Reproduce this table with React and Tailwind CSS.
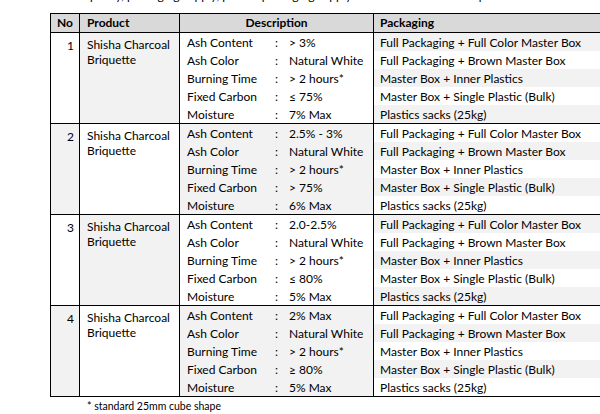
import React from 'react';

const groups = [
    {
        no: 1,
        specs: [
            ['Ash Content', '> 3%'],
            ['Ash Color', 'Natural White'],
            ['Burning Time', '> 2 hours*'],
            ['Fixed Carbon', '≤ 75%'],
            ['Moisture', '7% Max'],
        ],
    },
    {
        no: 2,
        specs: [
            ['Ash Content', '2.5% - 3%'],
            ['Ash Color', 'Natural White'],
            ['Burning Time', '> 2 hours*'],
            ['Fixed Carbon', '> 75%'],
            ['Moisture', '6% Max'],
        ],
    },
    {
        no: 3,
        specs: [
            ['Ash Content', '2.0-2.5%'],
            ['Ash Color', 'Natural White'],
            ['Burning Time', '> 2 hours*'],
            ['Fixed Carbon', '≤ 80%'],
            ['Moisture', '5% Max'],
        ],
    },
    {
        no: 4,
        specs: [
            ['Ash Content', '2% Max'],
            ['Ash Color', 'Natural White'],
            ['Burning Time', '> 2 hours*'],
            ['Fixed Carbon', '≥ 80%'],
            ['Moisture', '5% Max'],
        ],
    },
];

const packaging = [
    'Full Packaging + Full Color Master Box',
    'Full Packaging + Brown Master Box',
    'Master Box + Inner Plastics',
    'Master Box + Single Plastic (Bulk)',
    'Plastics sacks (25kg)',
];

const App = () => {
    return (
        <div className="w-[600px] h-[414px] overflow-hidden bg-white text-black text-[12px]" style={{ fontFamily: 'Lato, "Open Sans", sans-serif' }}>
            {/* bottom of the paragraph above, cut off by the page edge */}
            <div className="h-[13px] overflow-hidden relative">
                <div className="absolute bottom-[10px] left-[86px] whitespace-nowrap leading-[14px] text-[12px]">
                    quality, packaging supply, private packaging supply and OEM service on request
                </div>
            </div>

            <table className="ml-[50px] w-[552px] border-collapse border-[1.5px] border-black table-fixed">
                <colgroup>
                    <col className="w-[29px]" />
                    <col className="w-[100px]" />
                    <col className="w-[194px]" />
                    <col />
                </colgroup>
                <thead>
                    <tr className="bg-[#d9d9d9] h-[19px]">
                        <th className="border border-black text-left pl-[6px] font-bold">No</th>
                        <th className="border border-black text-left pl-[7px] font-bold">Product</th>
                        <th className="border border-black text-center font-bold">Description</th>
                        <th className="border border-black text-left pl-[6px] font-bold">Packaging</th>
                    </tr>
                </thead>
                <tbody>
                    {groups.map((g, gi) => {
                        const odd = gi % 2 === 0;
                        return (
                            <tr key={g.no} className="border-[1.5px] border-black">
                                <td className={`border border-black align-top text-right pr-[5px] pt-[4px] ${odd ? 'bg-white' : 'bg-[#f2f2f2]'}`}>
                                    {g.no}
                                </td>
                                <td className={`border border-black align-top pl-[7px] pt-[4px] leading-[15px] ${odd ? 'bg-[#f2f2f2]' : 'bg-white'}`}>
                                    Shisha Charcoal<br />Briquette
                                </td>
                                <td className={`border border-black p-0 ${odd ? 'bg-white' : 'bg-[#f2f2f2]'}`}>
                                    {g.specs.map(([label, value]) => (
                                        <div key={label} className="h-[18px] flex items-center pl-[7px] pt-[2px]">
                                            <span className="w-[88px]">{label}</span>
                                            <span className="w-[14px]">:</span>
                                            <span>{value}</span>
                                        </div>
                                    ))}
                                </td>
                                <td className="border border-black p-0">
                                    {packaging.map((p, pi) => {
                                        const gray = odd ? pi % 2 === 0 : pi % 2 === 1;
                                        return (
                                            <div key={p} className={`h-[18px] flex items-center pl-[6px] pt-[2px] ${gray ? 'bg-[#f2f2f2]' : 'bg-white'}`}>
                                                {p}
                                            </div>
                                        );
                                    })}
                                </td>
                            </tr>
                        );
                    })}
                </tbody>
            </table>

            <div className="pl-[87px] pt-[2px] text-[10.5px]">* standard 25mm cube shape</div>
        </div>
    );
};

export default App;
